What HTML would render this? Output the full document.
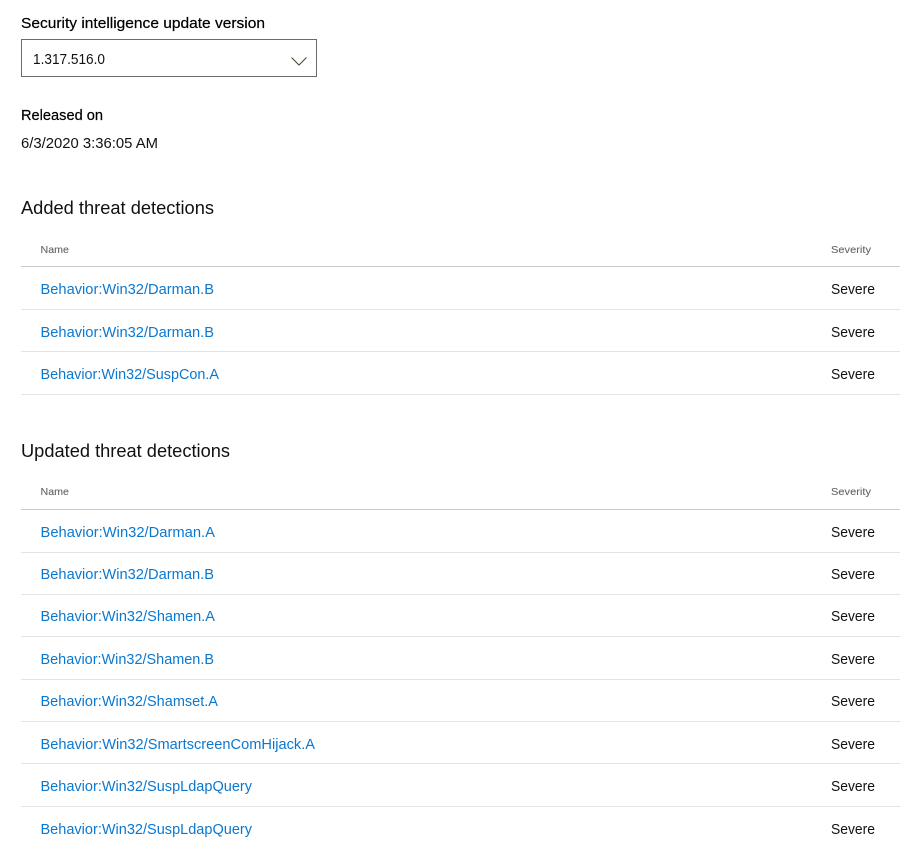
<!DOCTYPE html>
<html lang="en">
<head>
<meta charset="utf-8">
<title>Security intelligence update</title>
<style>
html,body{margin:0;padding:0;background:#fff;width:900px;height:848px;overflow:hidden}
svg{display:block}
text{font-family:"Liberation Sans",sans-serif;font-size:14.5px;fill:#111}
.b{font-size:14.5px;fill:#000;stroke:#000;stroke-width:.2px}
.h{font-size:18.5px;fill:#111}
.c{font-size:10.5px;fill:#666;stroke:#666;stroke-width:.1px}
.l{fill:#0b78d0}
</style>
</head>
<body>
<svg width="900" height="848" viewBox="0 0 900 848" xmlns="http://www.w3.org/2000/svg">
<text class="b" x="21" y="28" textLength="244" lengthAdjust="spacingAndGlyphs">Security intelligence update version</text>
<rect x="21.5" y="39.5" width="295" height="37" fill="#fff" stroke="#6b6b6b"/>
<text x="33" y="64" textLength="72" lengthAdjust="spacingAndGlyphs">1.317.516.0</text>
<path d="M291.500 57.500L299 65L306.500 57.500" fill="none" stroke="#4a4030" stroke-width="1"/>
<text class="b" x="21" y="120" textLength="82" lengthAdjust="spacingAndGlyphs">Released on</text>
<text x="21" y="148" textLength="137" lengthAdjust="spacingAndGlyphs">6/3/2020 3:36:05 AM</text>

<text class="h" x="21" y="214" textLength="193" lengthAdjust="spacingAndGlyphs">Added threat detections</text>
<text class="c" x="40.500" y="253" textLength="28.500" lengthAdjust="spacingAndGlyphs">Name</text>
<text class="c" x="831" y="253" textLength="40" lengthAdjust="spacingAndGlyphs">Severity</text>
<rect x="21" y="266" width="879" height="1" fill="#cbcbcb"/>
<text class="l" x="40.500" y="294" textLength="173.500" lengthAdjust="spacingAndGlyphs">Behavior:Win32/Darman.B</text>
<text x="831" y="294" textLength="44" lengthAdjust="spacingAndGlyphs">Severe</text>
<rect x="21" y="309" width="879" height="1" fill="#e4e4e4"/>
<text class="l" x="40.500" y="337" textLength="173.500" lengthAdjust="spacingAndGlyphs">Behavior:Win32/Darman.B</text>
<text x="831" y="337" textLength="44" lengthAdjust="spacingAndGlyphs">Severe</text>
<rect x="21" y="351" width="879" height="1" fill="#e4e4e4"/>
<text class="l" x="40.500" y="379" textLength="178.500" lengthAdjust="spacingAndGlyphs">Behavior:Win32/SuspCon.A</text>
<text x="831" y="379" textLength="44" lengthAdjust="spacingAndGlyphs">Severe</text>
<rect x="21" y="394" width="879" height="1" fill="#e4e4e4"/>

<text class="h" x="21" y="457" textLength="209" lengthAdjust="spacingAndGlyphs">Updated threat detections</text>
<text class="c" x="40.500" y="495" textLength="28.500" lengthAdjust="spacingAndGlyphs">Name</text>
<text class="c" x="831" y="495" textLength="40" lengthAdjust="spacingAndGlyphs">Severity</text>
<rect x="21" y="509" width="879" height="1" fill="#cbcbcb"/>
<text class="l" x="40.500" y="537" textLength="174.500" lengthAdjust="spacingAndGlyphs">Behavior:Win32/Darman.A</text>
<text x="831" y="537" textLength="44" lengthAdjust="spacingAndGlyphs">Severe</text>
<rect x="21" y="552" width="879" height="1" fill="#e4e4e4"/>
<text class="l" x="40.500" y="579" textLength="173.500" lengthAdjust="spacingAndGlyphs">Behavior:Win32/Darman.B</text>
<text x="831" y="579" textLength="44" lengthAdjust="spacingAndGlyphs">Severe</text>
<rect x="21" y="594" width="879" height="1" fill="#e4e4e4"/>
<text class="l" x="40.500" y="621" textLength="174.500" lengthAdjust="spacingAndGlyphs">Behavior:Win32/Shamen.A</text>
<text x="831" y="621" textLength="44" lengthAdjust="spacingAndGlyphs">Severe</text>
<rect x="21" y="636" width="879" height="1" fill="#e4e4e4"/>
<text class="l" x="40.500" y="664" textLength="173.500" lengthAdjust="spacingAndGlyphs">Behavior:Win32/Shamen.B</text>
<text x="831" y="664" textLength="44" lengthAdjust="spacingAndGlyphs">Severe</text>
<rect x="21" y="679" width="879" height="1" fill="#e4e4e4"/>
<text class="l" x="40.500" y="706" textLength="177.500" lengthAdjust="spacingAndGlyphs">Behavior:Win32/Shamset.A</text>
<text x="831" y="706" textLength="44" lengthAdjust="spacingAndGlyphs">Severe</text>
<rect x="21" y="721" width="879" height="1" fill="#e4e4e4"/>
<text class="l" x="40.500" y="749" textLength="274.500" lengthAdjust="spacingAndGlyphs">Behavior:Win32/SmartscreenComHijack.A</text>
<text x="831" y="749" textLength="44" lengthAdjust="spacingAndGlyphs">Severe</text>
<rect x="21" y="763" width="879" height="1" fill="#e4e4e4"/>
<text class="l" x="40.500" y="791" textLength="211.500" lengthAdjust="spacingAndGlyphs">Behavior:Win32/SuspLdapQuery</text>
<text x="831" y="791" textLength="44" lengthAdjust="spacingAndGlyphs">Severe</text>
<rect x="21" y="806" width="879" height="1" fill="#e4e4e4"/>
<text class="l" x="40.500" y="834" textLength="211.500" lengthAdjust="spacingAndGlyphs">Behavior:Win32/SuspLdapQuery</text>
<text x="831" y="834" textLength="44" lengthAdjust="spacingAndGlyphs">Severe</text>
</svg>
</body>
</html>
